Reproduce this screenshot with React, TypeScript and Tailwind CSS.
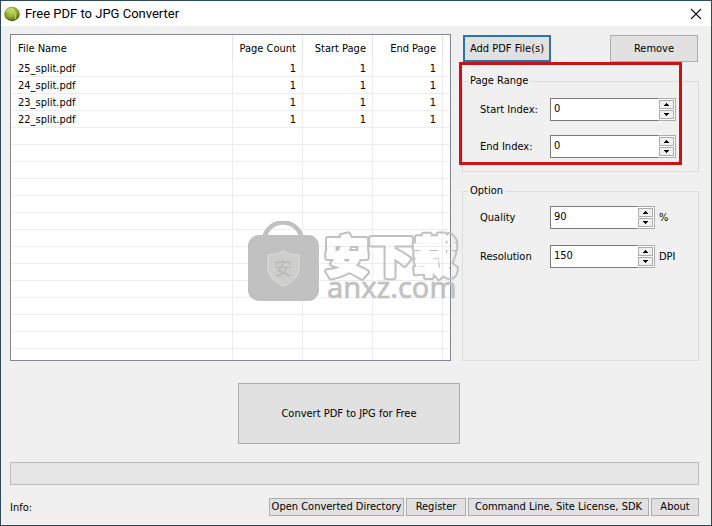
import { useState } from 'react';

interface PdfFile {
  name: string;
  pageCount: number;
  startPage: number;
  endPage: number;
}

const initialFiles: PdfFile[] = [
  { name: '25_split.pdf', pageCount: 1, startPage: 1, endPage: 1 },
  { name: '24_split.pdf', pageCount: 1, startPage: 1, endPage: 1 },
  { name: '23_split.pdf', pageCount: 1, startPage: 1, endPage: 1 },
  { name: '22_split.pdf', pageCount: 1, startPage: 1, endPage: 1 },
];

const VISIBLE_ROWS = 17;

export default function App() {
  return (
    <div className="min-h-screen flex flex-col border border-[#2f4a5a] bg-[#f0f0f0] font-['DejaVu_Sans_Condensed',sans-serif] text-[11px] leading-4 text-black">
      <TitleBar />
      <main className="flex flex-1 flex-col pt-2 pl-[9px] pr-3">
        <div className="flex gap-[11px]">
          <div className="relative min-w-0 flex-1">
            <FileTable />
            <Watermark />
          </div>
          <SettingsPanel />
        </div>

        {/* Convert */}
        <button className="mt-[22px] mr-[11px] h-[61px] w-[222px] self-center border border-[#adadad] bg-[#e1e1e1]">
          Convert PDF to JPG for Free
        </button>

        <div
          role="progressbar"
          aria-label="Progress"
          className="mt-[18px] h-[23px] border border-[#bcbcbc] bg-[#e6e6e6]"
        />

        <Footer />
      </main>
    </div>
  );
}

function TitleBar() {
  return (
    <header className="flex h-[25px] items-center bg-white pl-[3px] pr-[9px]">
      <svg width="16" height="16" viewBox="0 0 16 16" aria-hidden="true">
        <defs>
          <radialGradient id="ball" cx="0.45" cy="0.35" r="0.7">
            <stop offset="0" stopColor="#c6d868" />
            <stop offset="0.55" stopColor="#8fa62b" />
            <stop offset="1" stopColor="#3b4c0c" />
          </radialGradient>
        </defs>
        <ellipse cx="8" cy="8" rx="7.8" ry="7.2" fill="url(#ball)" />
        <path d="M7 2C10 4 12 8 11.500 13" fill="none" stroke="#dbe78f" strokeWidth="1.2" opacity="0.7" />
        <path d="M2.500 6C4 4 5 3 7.500 2.500" fill="none" stroke="#eef5c4" strokeWidth="1.2" opacity="0.7" />
      </svg>
      <h1 className="ml-[5px] flex-1 font-['Roboto',sans-serif] text-[13px]">Free PDF to JPG Converter</h1>
      <button aria-label="Close" className="flex items-center justify-center">
        <svg width="12" height="12" viewBox="0 0 12 12" stroke="#111" strokeWidth="1.1">
          <path d="M1 1L11 11M11 1L1 11" />
        </svg>
      </button>
    </header>
  );
}

function FileTable() {
  const emptyRows = Array.from({ length: VISIBLE_ROWS - initialFiles.length });

  return (
    <div className="border border-[#828790] bg-white">
      <table className="w-full table-fixed border-separate border-spacing-0 whitespace-nowrap">
        <colgroup>
          <col />
          <col className="w-[70px]" />
          <col className="w-[70px]" />
          <col className="w-[70px]" />
          <col className="w-[7px]" />
        </colgroup>
        <thead>
          <tr className="h-[25px] text-right">
            <th className="border-r border-[#e5e5e5] p-0 pt-[2px] pl-[7px] text-left font-normal">File Name</th>
            <th className="border-r border-[#e5e5e5] p-0 pt-[2px] pr-[6px] font-normal">Page Count</th>
            <th className="border-r border-[#e5e5e5] p-0 pt-[2px] pr-[6px] font-normal">Start Page</th>
            <th className="border-r border-[#e5e5e5] p-0 pt-[2px] pr-[6px] font-normal">End Page</th>
            <td className="p-0" />
          </tr>
        </thead>
        <tbody>
          {initialFiles.map((file) => (
            <tr key={file.name} className="h-[17px] text-right leading-[14px]">
              <td className="border-r border-b border-[#ededed] p-0 pt-[2px] pl-[7px] text-left">{file.name}</td>
              <td className="border-r border-b border-[#ededed] p-0 pt-[2px] pr-[6px]">{file.pageCount}</td>
              <td className="border-r border-b border-[#ededed] p-0 pt-[2px] pr-[6px]">{file.startPage}</td>
              <td className="border-r border-b border-[#ededed] p-0 pt-[2px] pr-[6px]">{file.endPage}</td>
              <td className="border-b border-[#ededed] p-0" />
            </tr>
          ))}
          {emptyRows.map((_, i) => (
            <tr key={i} className="h-[17px]">
              <td className="border-r border-b border-[#ededed] p-0" />
              <td className="border-r border-b border-[#ededed] p-0" />
              <td className="border-r border-b border-[#ededed] p-0" />
              <td className="border-r border-b border-[#ededed] p-0" />
              <td className="border-b border-[#ededed] p-0" />
            </tr>
          ))}
          <tr className="h-[11px]">
            <td className="border-r border-[#ededed] p-0" />
            <td className="border-r border-[#ededed] p-0" />
            <td className="border-r border-[#ededed] p-0" />
            <td className="border-r border-[#ededed] p-0" />
            <td className="p-0" />
          </tr>
        </tbody>
      </table>
    </div>
  );
}

function Watermark() {
  return (
    <svg
      width="218"
      height="84"
      viewBox="0 0 218 84"
      aria-hidden="true"
      className="pointer-events-none absolute top-[187px] left-[237px] z-10"
    >
      <defs>
        <mask id="hollow" maskUnits="userSpaceOnUse" x="0" y="0" width="218" height="84">
          <rect width="218" height="84" fill="white" />
          <text
            x="78"
            y="52"
            className="font-['Noto_Sans_CJK_SC',sans-serif] text-[44px] font-black"
            fill="black"
            stroke="black"
            strokeWidth="2"
            strokeLinejoin="round"
          >
            安下载
          </text>
        </mask>
      </defs>
      {/* Bag */}
      <path d="M17 18C21 -4 51 -4 55 18" fill="none" stroke="#c1c1c1" strokeWidth="4.5" />
      <rect x="1" y="14" width="71" height="66" rx="11" fill="#c1c1c1" />
      <path
        d="M36.500 30C42 33 47 34 52 34V47C52 56 45 61 36.500 65C28 61 21 56 21 47V34C26 34 31 33 36.500 30Z"
        fill="#cdcdcc"
        stroke="#d6d6d5"
        strokeWidth="1.500"
      />
      <text
        x="36"
        y="54"
        textAnchor="middle"
        fill="#b8b8b8"
        className="font-['Noto_Sans_CJK_SC',sans-serif] text-[18px]"
      >
        安
      </text>
      <text
        x="78"
        y="52"
        fill="none"
        stroke="#c1c1c1"
        strokeWidth="6"
        strokeLinejoin="round"
        mask="url(#hollow)"
        className="font-['Noto_Sans_CJK_SC',sans-serif] text-[44px] font-black"
      >
        安下载
      </text>
      <text
        x="80"
        y="77"
        fill="#c1c1c1"
        stroke="#c1c1c1"
        strokeWidth="0.600"
        className="font-['Noto_Sans',sans-serif] text-[29px]"
      >
        anxz.com
      </text>
    </svg>
  );
}

function SettingsPanel() {
  return (
    <div className="flex w-[237px] flex-col gap-[11px] pt-px">
      <div className="flex justify-between px-px">
        <button className="h-[27px] w-[88px] border-2 border-[#2a74ac] bg-[#e1e1e1]">Add PDF File(s)</button>
        <button className="h-[27px] w-[88px] border border-[#adadad] bg-[#e1e1e1]">Remove</button>
      </div>

      <div className="relative">
        <fieldset className="h-[99px] border border-[#dcdcdc] pl-[17px]">
          <legend className="-ml-[12px] px-[2px]">Page Range</legend>
          <div className="flex flex-col gap-[14px] pt-[9px]">
            <SpinField id="start-index" label="Start Index:" initial={0} wide />
            <SpinField id="end-index" label="End Index:" initial={0} wide />
          </div>
        </fieldset>
        {/* Highlight frame */}
        <div className="pointer-events-none absolute -top-[11px] right-[17px] -left-[3px] h-[103px] border-3 border-[#c81419]" />
      </div>

      <fieldset className="flex-1 border border-[#dcdcdc] pl-[17px]">
        <legend className="-ml-[12px] px-[2px]">Option</legend>
        <div className="flex flex-col gap-4 pt-[7px]">
          <SpinField id="quality" label="Quality" initial={90} unit="%" />
          <SpinField id="resolution" label="Resolution" initial={150} unit="DPI" />
        </div>
      </fieldset>
    </div>
  );
}

interface SpinFieldProps {
  id: string;
  label: string;
  initial: number;
  unit?: string;
  wide?: boolean;
}

function SpinField({ id, label, initial, unit, wide }: SpinFieldProps) {
  const [value, setValue] = useState(initial);

  return (
    <div className="flex items-center">
      <label htmlFor={id} className="w-[70px] whitespace-nowrap">
        {label}
      </label>
      <div className={wide ? 'flex h-[23px] w-[126px]' : 'flex h-[23px] w-[105px]'}>
        <input
          id={id}
          type="text"
          value={value}
          onChange={(e) => setValue(Number(e.target.value) || 0)}
          className="min-w-0 flex-1 border border-r-0 border-[#7a7a7a] bg-white pb-[2px] pl-[3px] outline-none"
        />
        <div className="flex w-[18px] flex-col gap-px border border-l-0 border-[#acacac] bg-white p-px">
          <button
            aria-label={`Increase ${label}`}
            onClick={() => setValue(value + 1)}
            className="flex h-[9px] items-center justify-center border border-[#acacac] bg-[#f0f0f0]"
          >
            <svg width="5" height="3" viewBox="0 0 5 3" shapeRendering="crispEdges">
              <path d="M0 3V2H1V1H2V0H3V1H4V2H5V3Z" />
            </svg>
          </button>
          <button
            aria-label={`Decrease ${label}`}
            onClick={() => setValue(Math.max(0, value - 1))}
            className="flex h-[9px] items-center justify-center border border-[#acacac] bg-[#f0f0f0]"
          >
            <svg width="5" height="3" viewBox="0 0 5 3" shapeRendering="crispEdges">
              <path d="M0 0V1H1V2H2V3H3V2H4V1H5V0Z" />
            </svg>
          </button>
        </div>
      </div>
      {unit && <span className="ml-1">{unit}</span>}
    </div>
  );
}

function Footer() {
  return (
    <footer className="mt-[13px] flex items-end justify-between">
      <span>Info:</span>
      <div className="flex gap-[2px] whitespace-nowrap">
        <button className="h-[18px] w-[135px] border border-[#adadad] bg-[#e1e1e1]">
          Open Converted Directory
        </button>
        <button className="h-[18px] w-[60px] border border-[#adadad] bg-[#e1e1e1]">Register</button>
        <button className="h-[18px] w-[181px] border border-[#adadad] bg-[#e1e1e1]">
          Command Line, Site License, SDK
        </button>
        <button className="h-[18px] w-[48px] border border-[#adadad] bg-[#e1e1e1]">About</button>
      </div>
    </footer>
  );
}
